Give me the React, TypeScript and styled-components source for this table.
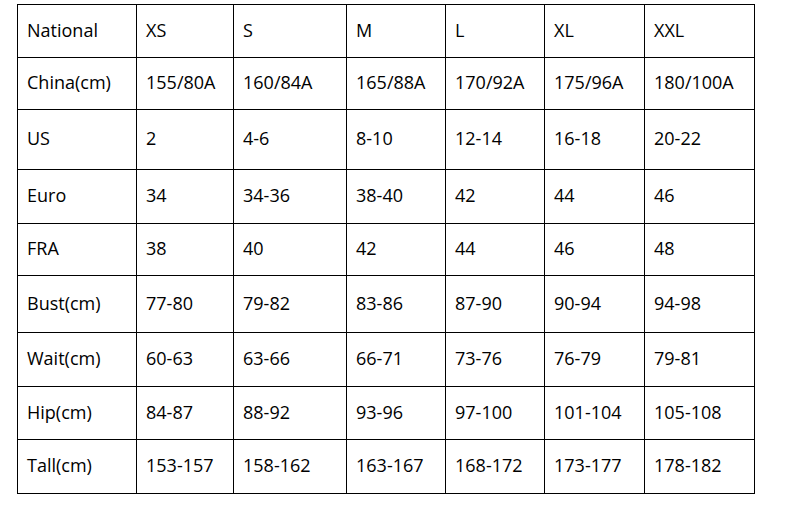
import styled, { createGlobalStyle } from "styled-components";

const GlobalStyle = createGlobalStyle`
  html, body {
    margin: 0;
    padding: 0;
    background: #ffffff;
  }
`;

const Page = styled.div`
  padding: 4px 0 0 17px;
  width: 808px;
  height: 506px;
  box-sizing: border-box;
  font-family: "Open Sans", "Noto Sans", sans-serif;
  color: #000;
`;

const Table = styled.table`
  border-collapse: collapse;
  table-layout: fixed;
  font-size: 18px;
`;

const Cell = styled.td<{ $w?: number }>`
  border: 1px solid #000;
  padding: 0 0 3px 9px;
  vertical-align: middle;
  white-space: nowrap;
  box-sizing: border-box;
  ${(p) => (p.$w ? `width: ${p.$w}px;` : "")}
`;

const Row = styled.tr<{ $h: number }>`
  height: ${(p) => p.$h}px;
`;

const widths = [119, 97, 113, 99, 99, 100, 110];
const heights = [53, 52, 60, 54, 52, 57, 54, 53, 54];

const rows: string[][] = [
  ["National", "XS", "S", "M", "L", "XL", "XXL"],
  ["China(cm)", "155/80A", "160/84A", "165/88A", "170/92A", "175/96A", "180/100A"],
  ["US", "2", "4-6", "8-10", "12-14", "16-18", "20-22"],
  ["Euro", "34", "34-36", "38-40", "42", "44", "46"],
  ["FRA", "38", "40", "42", "44", "46", "48"],
  ["Bust(cm)", "77-80", "79-82", "83-86", "87-90", "90-94", "94-98"],
  ["Wait(cm)", "60-63", "63-66", "66-71", "73-76", "76-79", "79-81"],
  ["Hip(cm)", "84-87", "88-92", "93-96", "97-100", "101-104", "105-108"],
  ["Tall(cm)", "153-157", "158-162", "163-167", "168-172", "173-177", "178-182"],
];

export default function App() {
  return (
    <>
      <GlobalStyle />
      <Page>
        <Table>
          <tbody>
            {rows.map((r, i) => (
              <Row key={i} $h={heights[i]}>
                {r.map((c, j) => (
                  <Cell key={j} $w={i === 0 ? widths[j] : undefined}>
                    {c}
                  </Cell>
                ))}
              </Row>
            ))}
          </tbody>
        </Table>
      </Page>
    </>
  );
}
